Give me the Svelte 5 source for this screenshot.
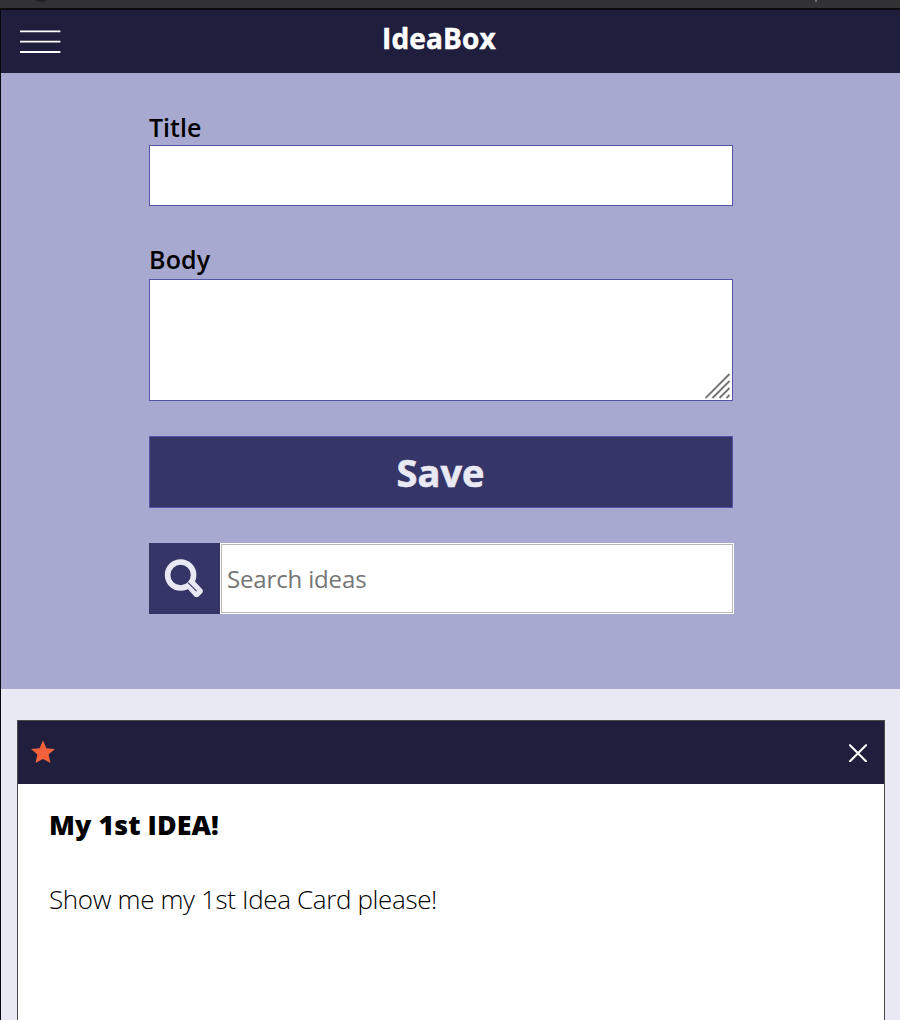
<script>
  let title = $state('');
  let body = $state('');
  let query = $state('');
  const ideas = [{ title: 'My 1st IDEA!', body: 'Show me my 1st Idea Card please!' }];
</script>

<div class="window">
  <div class="chrome"><span class="knob"></span><span class="tick"></span></div>
  <div class="app">
    <header>
      <svg class="menu" width="42" height="24" viewBox="0 0 42 24" aria-label="Menu">
        <path d="M0 1.4h40.4M0 11.6h40.4M0 22h40.4" stroke="#fff" stroke-width="1.9" />
      </svg>
      <h1>IdeaBox</h1>
    </header>
    <form>
      <label for="title">Title</label>
      <input id="title" class="title-input" bind:value={title} />
      <label for="body" class="body-label">Body</label>
      <div class="area">
        <textarea id="body" bind:value={body}></textarea>
        <svg class="grip" width="26" height="26" viewBox="0 0 26 26">
          <path d="M0.5 25L24.5 1M7.5 25L24.5 8M14.5 25L24.5 15M21.5 25L24.5 22" stroke="#747474" stroke-width="1.9" />
        </svg>
      </div>
      <button type="button" class="save">Save</button>
      <div class="search">
        <button type="button" class="lens" aria-label="Search">
          <svg width="40" height="40" viewBox="0 0 40 40">
            <path d="M27.3 22.3L36.6 32.2Q37.3 33 36.6 33.9L33.5 36.9Q32.6 37.6 31.7 36.9L23 27.3Z" fill="#e9e9f4" stroke="#e9e9f4" stroke-width="3.8" stroke-linejoin="round" />
            <circle cx="16.6" cy="17" r="13" fill="#353567" stroke="#e9e9f4" stroke-width="5.6" />
            <path d="M24 24.6L32.6 33.2" stroke="#353567" stroke-width="1.1" />
          </svg>
        </button>
        <div class="field"><input placeholder="Search ideas" bind:value={query} /></div>
      </div>
    </form>
    <main>
      {#each ideas as idea}
        <article>
          <div class="bar">
            <svg class="star" width="24" height="24" viewBox="0 0 24 24">
              <path d="M12 0.3L15.4 8.2L24 8.9L17.6 14.5L19.5 23L12 18.9L4.5 23L6.4 14.5L0 8.9L8.6 8.2Z" fill="#f1623b" />
            </svg>
            <svg width="18" height="18" viewBox="0 0 18 18">
              <path d="M1 1.2L17 17.2M17 1.2L1 17.2" stroke="#fff" stroke-width="2.1" stroke-linecap="round" />
            </svg>
          </div>
          <div class="content">
            <h2>{idea.title}</h2>
            <p>{idea.body}</p>
          </div>
        </article>
      {/each}
    </main>
  </div>
</div>

<style>
  :global(body) { overflow: hidden; }
  .window, .window * { box-sizing: border-box; }
  .window {
    width: 900px;
    height: 1020px;
    overflow: hidden;
    display: flex;
    flex-direction: column;
    background: #08090e;
    font-family: 'Open Sans', sans-serif;
    color: #000;
  }
  .chrome {
    position: relative;
    flex: none;
    height: 10px;
    background: #323234;
    border-bottom: 2px solid #0c0c0c;
    overflow: hidden;
  }
  .knob { position: absolute; left: 29px; top: -22px; width: 24px; height: 24px; border-radius: 50%; background: #232325; }
  .tick { position: absolute; left: 815px; top: 0; width: 2px; height: 2px; background: #707072; }
  .app { flex: 1; min-height: 0; margin-left: 1px; background: #e9e9f3; display: flex; flex-direction: column; }
  header {
    flex: none;
    height: 63px;
    background: #1f1e3d;
    display: grid;
    grid-template-columns: 42px 1fr 42px;
    align-items: start;
    padding: 20px 42px 0 19px;
  }
  h1 {
    margin: -11px 0 0;
    font-size: 28px;
    line-height: 38px;
    font-weight: 700;
    letter-spacing: 0.15px;
    -webkit-text-stroke: 0.5px #fff;
    color: #fff;
    text-align: center;
  }
  form {
    flex: none;
    height: 616px;
    background: #a8a9d1;
    padding: 37px 166px 0 148px;
    display: flex;
    flex-direction: column;
  }
  label { font-size: 25px; line-height: 35px; font-weight: 600; }
  input, textarea, button { font-family: inherit; margin: 0; border-radius: 0; outline: none; }
  .title-input { width: 584px; height: 61px; border: 1px solid #5356a8; background: #fff; font-size: 25px; padding: 0 6px; }
  .body-label { margin-top: 36px; letter-spacing: 0.15px; }
  .area { position: relative; width: 584px; height: 122px; margin-top: 2px; }
  textarea { display: block; width: 100%; height: 100%; border: 1px solid #5356a8; resize: none; padding: 6px; font-size: 25px; }
  .grip { position: absolute; right: 2px; bottom: 2px; pointer-events: none; }
  .save {
    width: 584px;
    height: 72px;
    margin-top: 35px;
    padding: 0 1px 0 0;
    border: 1px solid #5356a8;
    background: #353567;
    color: #e9e9f4;
    font-size: 38px;
    line-height: 70px;
    font-weight: 700;
    -webkit-text-stroke: 0.6px #e9e9f4;
  }
  .search { display: flex; width: 585px; height: 71px; margin-top: 35px; }
  .lens { width: 71px; flex: none; border: 0; padding: 15px 0 0 15px; background: #353567; display: flex; }
  .field { flex: 1; background: #fff; padding: 1px; display: flex; }
  .field input { width: 100%; border: 1px solid #b9b9b9; padding: 0 5px; font-size: 24px; letter-spacing: -0.15px; background: #fff; }
  .field input::placeholder { color: #757575; opacity: 1; }
  main { padding: 31px 15px 0 16px; }
  article { height: 420px; border: 1px solid #4b4b4b; background: #fff; }
  .bar { height: 63px; background: #1f1e3d; display: flex; align-items: center; justify-content: space-between; padding: 0 17px 0 13px; }
  .star { margin-top: -2px; }
  .content { padding: 23px 31px; }
  h2 { margin: 0; font-size: 26.8px; line-height: 36px; font-weight: 800; letter-spacing: 0.08px; }
  p { margin: 38px 0 0; font-size: 26px; line-height: 36px; font-weight: 300; letter-spacing: -0.36px; }
</style>
